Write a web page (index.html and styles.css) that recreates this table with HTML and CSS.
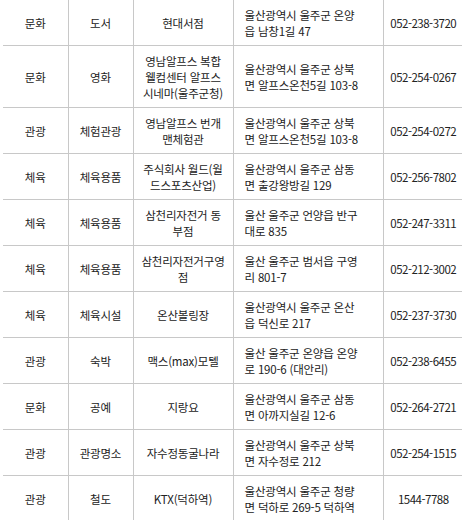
FILE: index.html
```html
<!DOCTYPE html>
<html lang="ko">
<head>
<meta charset="utf-8">
<title>업체 목록</title>
<link rel="stylesheet" href="styles.css">
</head>
<body>
<table class="list">
  <colgroup>
    <col class="c-cat">
    <col class="c-type">
    <col class="c-name">
    <col class="c-addr">
    <col class="c-tel">
  </colgroup>
  <tbody>
    <tr><td>문화</td><td>도서</td><td>현대서점</td><td class="addr">울산광역시 울주군 온양<br>읍 남창1길 47</td><td class="tel">052-238-3720</td></tr>
    <tr><td>문화</td><td>영화</td><td>영남알프스 복합<br>웰컴센터 알프스<br>시네마(울주군청)</td><td class="addr">울산광역시 울주군 상북<br>면 알프스온천5길 103-8</td><td class="tel">052-254-0267</td></tr>
    <tr><td>관광</td><td>체험관광</td><td>영남알프스 번개<br>맨체험관</td><td class="addr">울산광역시 울주군 상북<br>면 알프스온천5길 103-8</td><td class="tel">052-254-0272</td></tr>
    <tr><td>체육</td><td>체육용품</td><td>주식회사 월드(월<br>드스포츠산업)</td><td class="addr">울산광역시 울주군 삼동<br>면 출강왕방길 129</td><td class="tel">052-256-7802</td></tr>
    <tr><td>체육</td><td>체육용품</td><td>삼천리자전거 동<br>부점</td><td class="addr">울산 울주군 언양읍 반구<br>대로 835</td><td class="tel">052-247-3311</td></tr>
    <tr><td>체육</td><td>체육용품</td><td>삼천리자전거구영<br>점</td><td class="addr">울산 울주군 범서읍 구영<br>리 801-7</td><td class="tel">052-212-3002</td></tr>
    <tr><td>체육</td><td>체육시설</td><td>온산볼링장</td><td class="addr">울산광역시 울주군 온산<br>읍 덕신로 217</td><td class="tel">052-237-3730</td></tr>
    <tr><td>관광</td><td>숙박</td><td>맥스(max)모텔</td><td class="addr">울산 울주군 온양읍 온양<br>로 190-6 (대안리)</td><td class="tel">052-238-6455</td></tr>
    <tr><td>문화</td><td>공예</td><td>지랑요</td><td class="addr">울산광역시 울주군 삼동<br>면 아까지실길 12-6</td><td class="tel">052-264-2721</td></tr>
    <tr><td>관광</td><td>관광명소</td><td>자수정동굴나라</td><td class="addr">울산광역시 울주군 상북<br>면 자수정로 212</td><td class="tel">052-254-1515</td></tr>
    <tr><td>관광</td><td>철도</td><td>KTX(덕하역)</td><td class="addr">울산광역시 울주군 청량<br>면 덕하로 269-5 덕하역</td><td class="tel">1544-7788</td></tr>
  </tbody>
</table>
</body>
</html>
```
FILE: styles.css
```css
html, body {
  margin: 0;
  padding: 0;
  background: #fff;
  overflow: hidden;
}

.list {
  border-collapse: collapse;
  border-style: hidden;
  table-layout: fixed;
  width: 460px;
  margin: 0 0 0 3px;
  font-family: "Noto Sans CJK KR", "Noto Sans", sans-serif;
  font-size: 11.5px;
  letter-spacing: -0.2px;
  line-height: 16px;
  color: #222;
}

.c-cat { width: 65px; }
.c-type { width: 65px; }
.c-name { width: 100px; }
.c-addr { width: 150px; }
.c-tel { width: 80px; }

.list td {
  border: 1px solid #c8c8c8;
  padding: 6.5px 0;
  text-align: center;
  vertical-align: middle;
  white-space: nowrap;
  overflow: hidden;
}

.list td.addr {
  text-align: left;
  padding-left: 11px;
}

.list td.tel {
  letter-spacing: -0.5px;
}
```
